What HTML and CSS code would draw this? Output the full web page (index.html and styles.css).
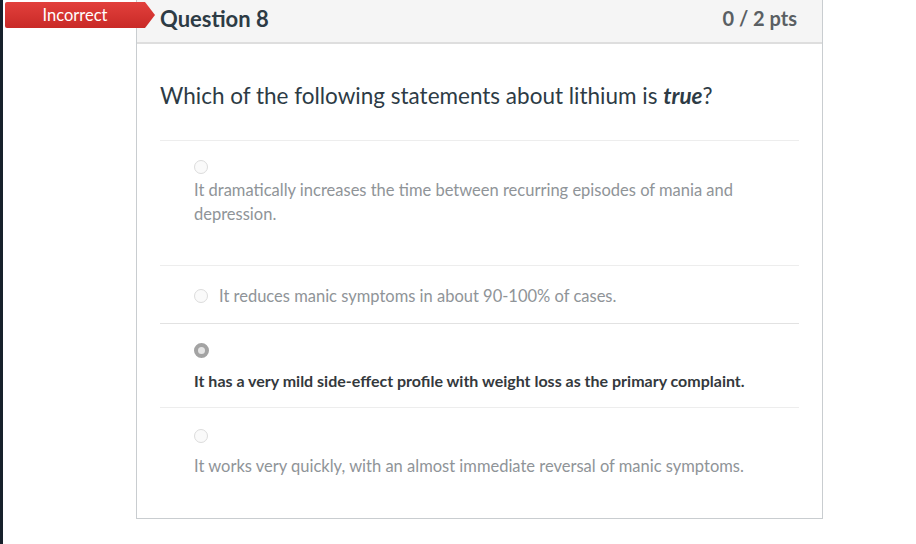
FILE: index.html
```html
<!DOCTYPE html>
<html>
<head>
<meta charset="utf-8">
<link rel="stylesheet" href="styles.css">
</head>
<body>
<div class="strip"></div>
<main class="page">
  <div class="badge">Incorrect</div>
  <section class="question">
    <header class="q-header">
      <h2 class="q-title">Question 8</h2>
      <span class="q-pts">0 / 2 pts</span>
    </header>
    <div class="q-body">
      <p class="q-text">Which of the following statements about lithium is <em>true</em>?</p>
      <div class="answers">
        <div class="answer stacked">
          <span class="radio"></span>
          <div class="a-text">It dramatically increases the time between recurring episodes of mania and depression.</div>
        </div>
        <div class="answer inline">
          <span class="radio"></span>
          <div class="a-text">It reduces manic symptoms in about 90-100% of cases.</div>
        </div>
        <div class="answer stacked selected">
          <span class="radio"></span>
          <div class="a-text">It has a very mild side-effect profile with weight loss as the primary complaint.</div>
        </div>
        <div class="answer stacked last">
          <span class="radio"></span>
          <div class="a-text">It works very quickly, with an almost immediate reversal of manic symptoms.</div>
        </div>
      </div>
    </div>
  </section>
</main>
</body>
</html>
```

FILE: styles.css
```css
html, body {
  margin: 0;
  padding: 0;
  background: #ffffff;
}
body {
  display: flex;
  font-family: Lato, "Liberation Sans", sans-serif;
  min-height: 544px;
}
.strip {
  width: 3px;
  background: #17212b;
  flex: none;
}
.page {
  position: relative;
  flex: 1;
  padding-left: 133px;
}
.badge {
  position: absolute;
  left: 2px;
  top: 2px;
  width: 150px;
  height: 26px;
  box-sizing: border-box;
  padding-right: 10px;
  display: flex;
  align-items: center;
  justify-content: center;
  color: #fff;
  font-size: 16.5px;
  background: linear-gradient(#e2403c, #c92a27);
  clip-path: polygon(0 0, 140px 0, 150px 50%, 140px 100%, 0 100%);
  border-radius: 2px;
  z-index: 2;
}
.question {
  width: 687px;
  border: 1px solid #c9cdd0;
  border-top: none;
  height: 519px;
  box-sizing: border-box;
}
.q-header {
  height: 44px;
  box-sizing: border-box;
  background: #f5f5f5;
  border-bottom: 2px solid #dedede;
  display: flex;
  justify-content: space-between;
  align-items: center;
  padding: 0 25px 6px 23px;
}
.q-title {
  margin: 0;
  font-size: 22px;
  font-weight: 700;
  color: #2d3b45;
}
.q-pts {
  font-size: 20px;
  font-weight: 700;
  color: #5a5f63;
}
.q-body {
  padding: 0 23px;
}
.q-text {
  margin: 0;
  height: 96px;
  box-sizing: border-box;
  padding-top: 38px;
  font-size: 22.5px;
  line-height: 28px;
  color: #2d3b45;
}
.q-text em {
  font-weight: 700;
  font-style: italic;
}
.answers {
  display: flex;
  flex-direction: column;
}
.answer {
  border-top: 1px solid #ededed;
  padding-left: 34px;
  font-size: 16.5px;
  line-height: 24px;
  color: #8f9498;
}
.answer.stacked {
  padding-top: 19px;
  padding-bottom: 39px;
}
.answer.stacked .radio {
  display: block;
  margin-bottom: 4px;
}
.answer.selected {
  padding-bottom: 14px;
  border-top-color: #e2e2e2;
  color: #34393d;
  font-size: 16px;
  font-weight: 700;
}
.answer.selected .radio {
  margin-bottom: 11px;
}
.answer.last {
  padding-top: 21px;
}
.answer.last .radio {
  margin-bottom: 11px;
}
.answer.inline {
  display: flex;
  align-items: center;
  gap: 11px;
  padding-top: 18px;
  padding-bottom: 15px;
}
.radio {
  width: 14px;
  height: 14px;
  box-sizing: border-box;
  border-radius: 50%;
  border: 1px solid #dcdcdc;
  background: #fafafa;
  flex: none;
}
.selected .radio {
  width: 15px;
  height: 15px;
  border: 4px solid #a3a3a3;
  background: #e4e4e4;
}
```
